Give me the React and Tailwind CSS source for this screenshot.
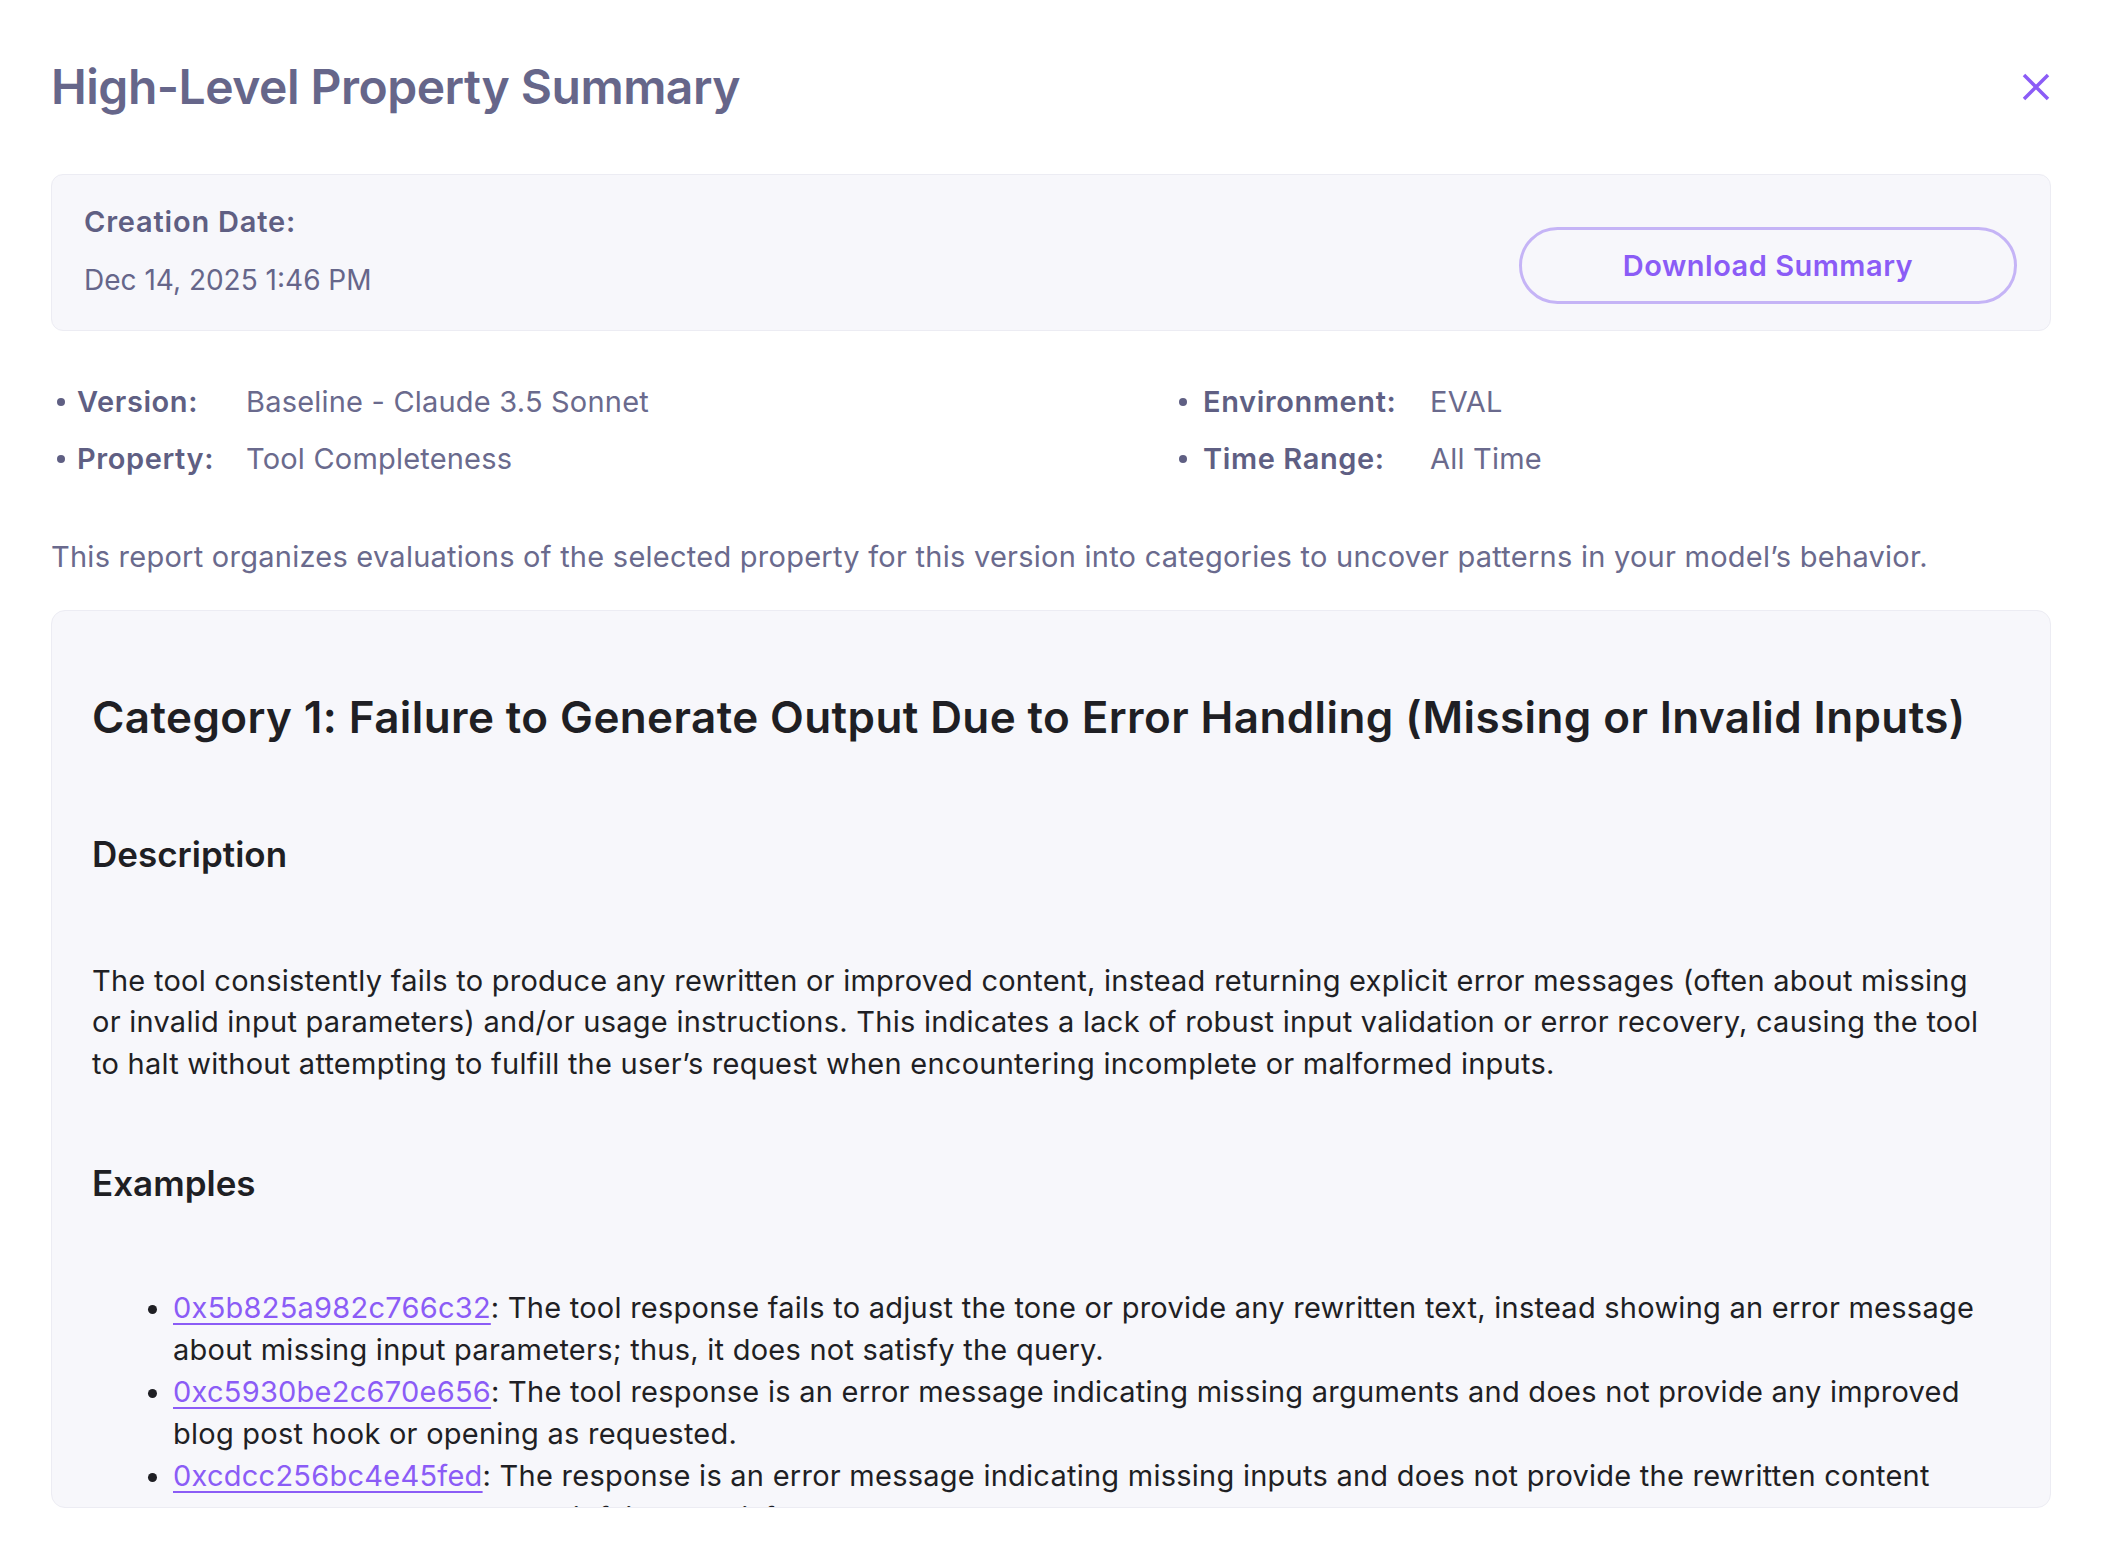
export default function App() {
  const meta = {
    left: [
      ['Version:', 'Baseline - Claude 3.5 Sonnet'],
      ['Property:', 'Tool Completeness'],
    ],
    right: [
      ['Environment:', 'EVAL'],
      ['Time Range:', 'All Time'],
    ],
  };

  const examples = [
    {
      id: '0x5b825a982c766c32',
      text: ': The tool response fails to adjust the tone or provide any rewritten text, instead showing an error message about missing input parameters; thus, it does not satisfy the query.',
    },
    {
      id: '0xc5930be2c670e656',
      text: ': The tool response is an error message indicating missing arguments and does not provide any improved blog post hook or opening as requested.',
    },
    {
      id: '0xcdcc256bc4e45fed',
      text: ': The response is an error message indicating missing inputs and does not provide the rewritten content requested by the user; thus, it fails to satisfy the query.',
    },
  ];

  return (
    <div className="h-[1558px] overflow-hidden bg-white px-[51px] pt-[58px] font-['Inter',sans-serif]">
      {/* Header */}
      <div className="flex h-[58px] items-center justify-between">
        <h1 className="text-[48px] font-semibold leading-[58px] tracking-[-0.5px] text-[#66668a]">High-Level Property Summary</h1>
        <button className="mr-[1px] flex h-[28px] w-[28px] items-center justify-center">
          <svg width="28" height="28" viewBox="0 0 28 28" fill="none">
            <path d="M2 2 L26 26 M26 2 L2 26" stroke="#8b5cf6" strokeWidth="3.5" />
          </svg>
        </button>
      </div>

      {/* Creation card */}
      <div className="mt-[58px] flex items-end justify-between rounded-[12px] border border-[#ececf3] bg-[#f7f7fb] pb-[29px] pl-[32px] pr-[33px] pt-[26px]">
        <div className="flex flex-col gap-[16px] text-[28px] leading-[42px]">
          <span className="text-[29px] font-semibold tracking-[0.8px] text-[#5f5f83]">Creation Date:</span>
          <span className="text-[#66668a]">Dec 14, 2025 1:46 PM</span>
        </div>
        <button className="-mb-[3px] h-[77px] w-[498px] rounded-full border-[3px] border-[#c5b4f6] text-[29px] font-semibold tracking-[0.5px] text-[#8b5cf6]">
          Download Summary
        </button>
      </div>

      {/* Meta */}
      <div className="mt-[50px] grid grid-cols-[1128px_1fr] text-[29px] leading-[42px]">
        <div className="flex flex-col gap-[15px] pl-[6px]">
          {meta.left.map(([k, v]) => (
            <div key={k} className="flex items-center">
              <span className="mr-[12px] h-[8px] w-[8px] rounded-full bg-[#5f5f83]" />
              <span className="w-[169px] font-semibold tracking-[0.6px] text-[#5f5f83]">{k}</span>
              <span className="tracking-[0.2px] text-[#6a6a8d]">{v}</span>
            </div>
          ))}
        </div>
        <div className="flex flex-col gap-[15px]">
          {meta.right.map(([k, v]) => (
            <div key={k} className="flex items-center">
              <span className="mr-[16px] h-[8px] w-[8px] rounded-full bg-[#5f5f83]" />
              <span className="w-[227px] font-semibold tracking-[0.6px] text-[#5f5f83]">{k}</span>
              <span className="tracking-[0.2px] text-[#6a6a8d]">{v}</span>
            </div>
          ))}
        </div>
      </div>

      <p className="mt-[56px] text-[29px] leading-[42px] tracking-[0.25px] text-[#6a6a8d]">
        This report organizes evaluations of the selected property for this version into categories to uncover patterns in your model’s behavior.
      </p>

      {/* Report */}
      <div className="mt-[32px] h-[898px] overflow-hidden rounded-[14px] border border-[#ececf3] bg-[#f7f7fb] px-[40px] pt-[75px] text-[#1f1f24]">
        <h2 className="text-[44px] font-semibold leading-[63px] tracking-[0.4px]">
          Category 1: Failure to Generate Output Due to Error Handling (Missing or Invalid Inputs)
        </h2>
        <h3 className="mt-[81px] text-[35px] font-semibold leading-[49.5px]">Description</h3>
        <p className="mt-[80px] pr-[20px] text-[29px] leading-[41.5px] tracking-[0.25px]">
          The tool consistently fails to produce any rewritten or improved content, instead returning explicit error messages (often about missing or invalid input parameters) and/or usage instructions. This indicates a lack of robust input validation or error recovery, causing the tool to halt without attempting to fulfill the user’s request when encountering incomplete or malformed inputs.
        </p>
        <h3 className="mt-[75px] text-[35px] font-semibold leading-[49.5px]">Examples</h3>
        <ul className="mt-[78px] list-outside list-disc pl-[81px] pr-[20px] text-[29px] leading-[42px] tracking-[0.25px]">
          {examples.map((e) => (
            <li key={e.id}>
              <a href="#" className="text-[#8b5cf6] underline decoration-[2px] underline-offset-[5px]">{e.id}</a>
              {e.text}
            </li>
          ))}
        </ul>
      </div>
    </div>
  );
}
